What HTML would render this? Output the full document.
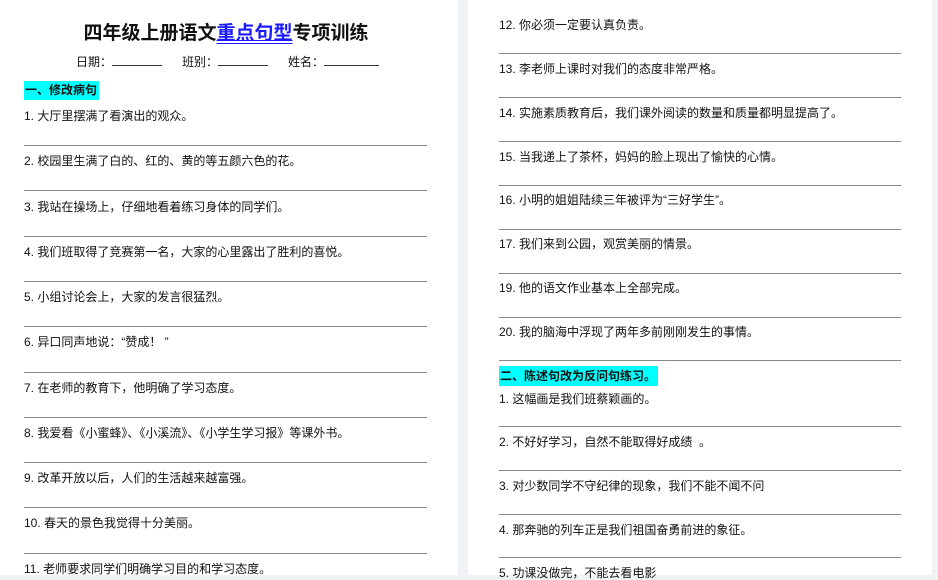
<!DOCTYPE html>
<html><head><meta charset="utf-8"><style>
body{margin:0;width:938px;height:575px;background:#f1f2f6;position:relative;overflow:hidden;font-family:"Liberation Sans","Noto Sans CJK SC",sans-serif;color:#111}
.pg{position:absolute;top:0;height:575px;background:#fff}
.t{position:absolute;font-size:12px;line-height:14px;white-space:nowrap}
.l{position:absolute;height:1px;background:#888}
.h{position:absolute;background:#00ffff;font-weight:bold;font-size:12px;line-height:19px;padding:0 2px 0 1px}
</style></head><body>
<div class="pg" style="left:0;width:458px"></div>
<div class="pg" style="left:468px;width:464px"></div>
<div style="position:absolute;left:0;width:452px;top:22px;text-align:center;font-weight:bold;font-size:19px;line-height:24px">四年级上册语文<span style="color:#1a1aff;text-decoration:underline double">重点句型</span>专项训练</div>
<div class="t" style="left:76px;top:55px;font-size:12px">日期：<span style="display:inline-block;width:50px;border-bottom:1px solid #333"></span>&nbsp;&nbsp;&nbsp;&nbsp;&nbsp;&nbsp;班别：<span style="display:inline-block;width:50px;border-bottom:1px solid #333"></span>&nbsp;&nbsp;&nbsp;&nbsp;&nbsp;&nbsp;姓名：<span style="display:inline-block;width:55px;border-bottom:1px solid #333"></span></div>
<div class="h" style="left:24px;top:81px">一、修改病句</div>
<div class="t" style="left:24px;top:109px">1. 大厅里摆满了看演出的观众。</div>
<div class="l" style="left:24px;width:403px;top:145px"></div>
<div class="t" style="left:24px;top:154px">2. 校园里生满了白的、红的、黄的等五颜六色的花。</div>
<div class="l" style="left:24px;width:403px;top:190px"></div>
<div class="t" style="left:24px;top:200px">3. 我站在操场上，仔细地看着练习身体的同学们。</div>
<div class="l" style="left:24px;width:403px;top:236px"></div>
<div class="t" style="left:24px;top:245px">4. 我们班取得了竞赛第一名，大家的心里露出了胜利的喜悦。</div>
<div class="l" style="left:24px;width:403px;top:281px"></div>
<div class="t" style="left:24px;top:290px">5. 小组讨论会上，大家的发言很猛烈。</div>
<div class="l" style="left:24px;width:403px;top:326px"></div>
<div class="t" style="left:24px;top:335px">6. 异口同声地说：“赞成！ ”</div>
<div class="l" style="left:24px;width:403px;top:372px"></div>
<div class="t" style="left:24px;top:381px">7. 在老师的教育下，他明确了学习态度。</div>
<div class="l" style="left:24px;width:403px;top:417px"></div>
<div class="t" style="left:24px;top:426px">8. 我爱看《小蜜蜂》、《小溪流》、《小学生学习报》等课外书。</div>
<div class="l" style="left:24px;width:403px;top:462px"></div>
<div class="t" style="left:24px;top:471px">9. 改革开放以后，人们的生活越来越富强。</div>
<div class="l" style="left:24px;width:403px;top:507px"></div>
<div class="t" style="left:24px;top:516px">10. 春天的景色我觉得十分美丽。</div>
<div class="l" style="left:24px;width:403px;top:553px"></div>
<div class="t" style="left:24px;top:562px">11. 老师要求同学们明确学习目的和学习态度。</div>

<div class="t" style="left:499px;top:18px">12. 你必须一定要认真负责。</div>
<div class="l" style="left:499px;width:402px;top:53px"></div>
<div class="t" style="left:499px;top:62px">13. 李老师上课时对我们的态度非常严格。</div>
<div class="l" style="left:499px;width:402px;top:97px"></div>
<div class="t" style="left:499px;top:106px">14. 实施素质教育后，我们课外阅读的数量和质量都明显提高了。</div>
<div class="l" style="left:499px;width:402px;top:141px"></div>
<div class="t" style="left:499px;top:150px">15. 当我递上了茶杯，妈妈的脸上现出了愉快的心情。</div>
<div class="l" style="left:499px;width:402px;top:185px"></div>
<div class="t" style="left:499px;top:193px">16. 小明的姐姐陆续三年被评为“三好学生”。</div>
<div class="l" style="left:499px;width:402px;top:229px"></div>
<div class="t" style="left:499px;top:237px">17. 我们来到公园，观赏美丽的情景。</div>
<div class="l" style="left:499px;width:402px;top:273px"></div>
<div class="t" style="left:499px;top:281px">19. 他的语文作业基本上全部完成。</div>
<div class="l" style="left:499px;width:402px;top:317px"></div>
<div class="t" style="left:499px;top:325px">20. 我的脑海中浮现了两年多前刚刚发生的事情。</div>
<div class="l" style="left:499px;width:402px;top:360px"></div>
<div class="h" style="left:499px;top:366px;line-height:20px">二、陈述句改为反问句练习。</div>
<div class="t" style="left:499px;top:392px">1. 这幅画是我们班蔡颖画的。</div>
<div class="l" style="left:499px;width:402px;top:426px"></div>
<div class="t" style="left:499px;top:435px">2. 不好好学习，自然不能取得好成绩 &nbsp;。</div>
<div class="l" style="left:499px;width:402px;top:470px"></div>
<div class="t" style="left:499px;top:479px">3. 对少数同学不守纪律的现象，我们不能不闻不问</div>
<div class="l" style="left:499px;width:402px;top:514px"></div>
<div class="t" style="left:499px;top:523px">4. 那奔驰的列车正是我们祖国奋勇前进的象征。</div>
<div class="l" style="left:499px;width:402px;top:557px"></div>
<div class="t" style="left:499px;top:566px">5. 功课没做完，不能去看电影</div>
</body></html>
